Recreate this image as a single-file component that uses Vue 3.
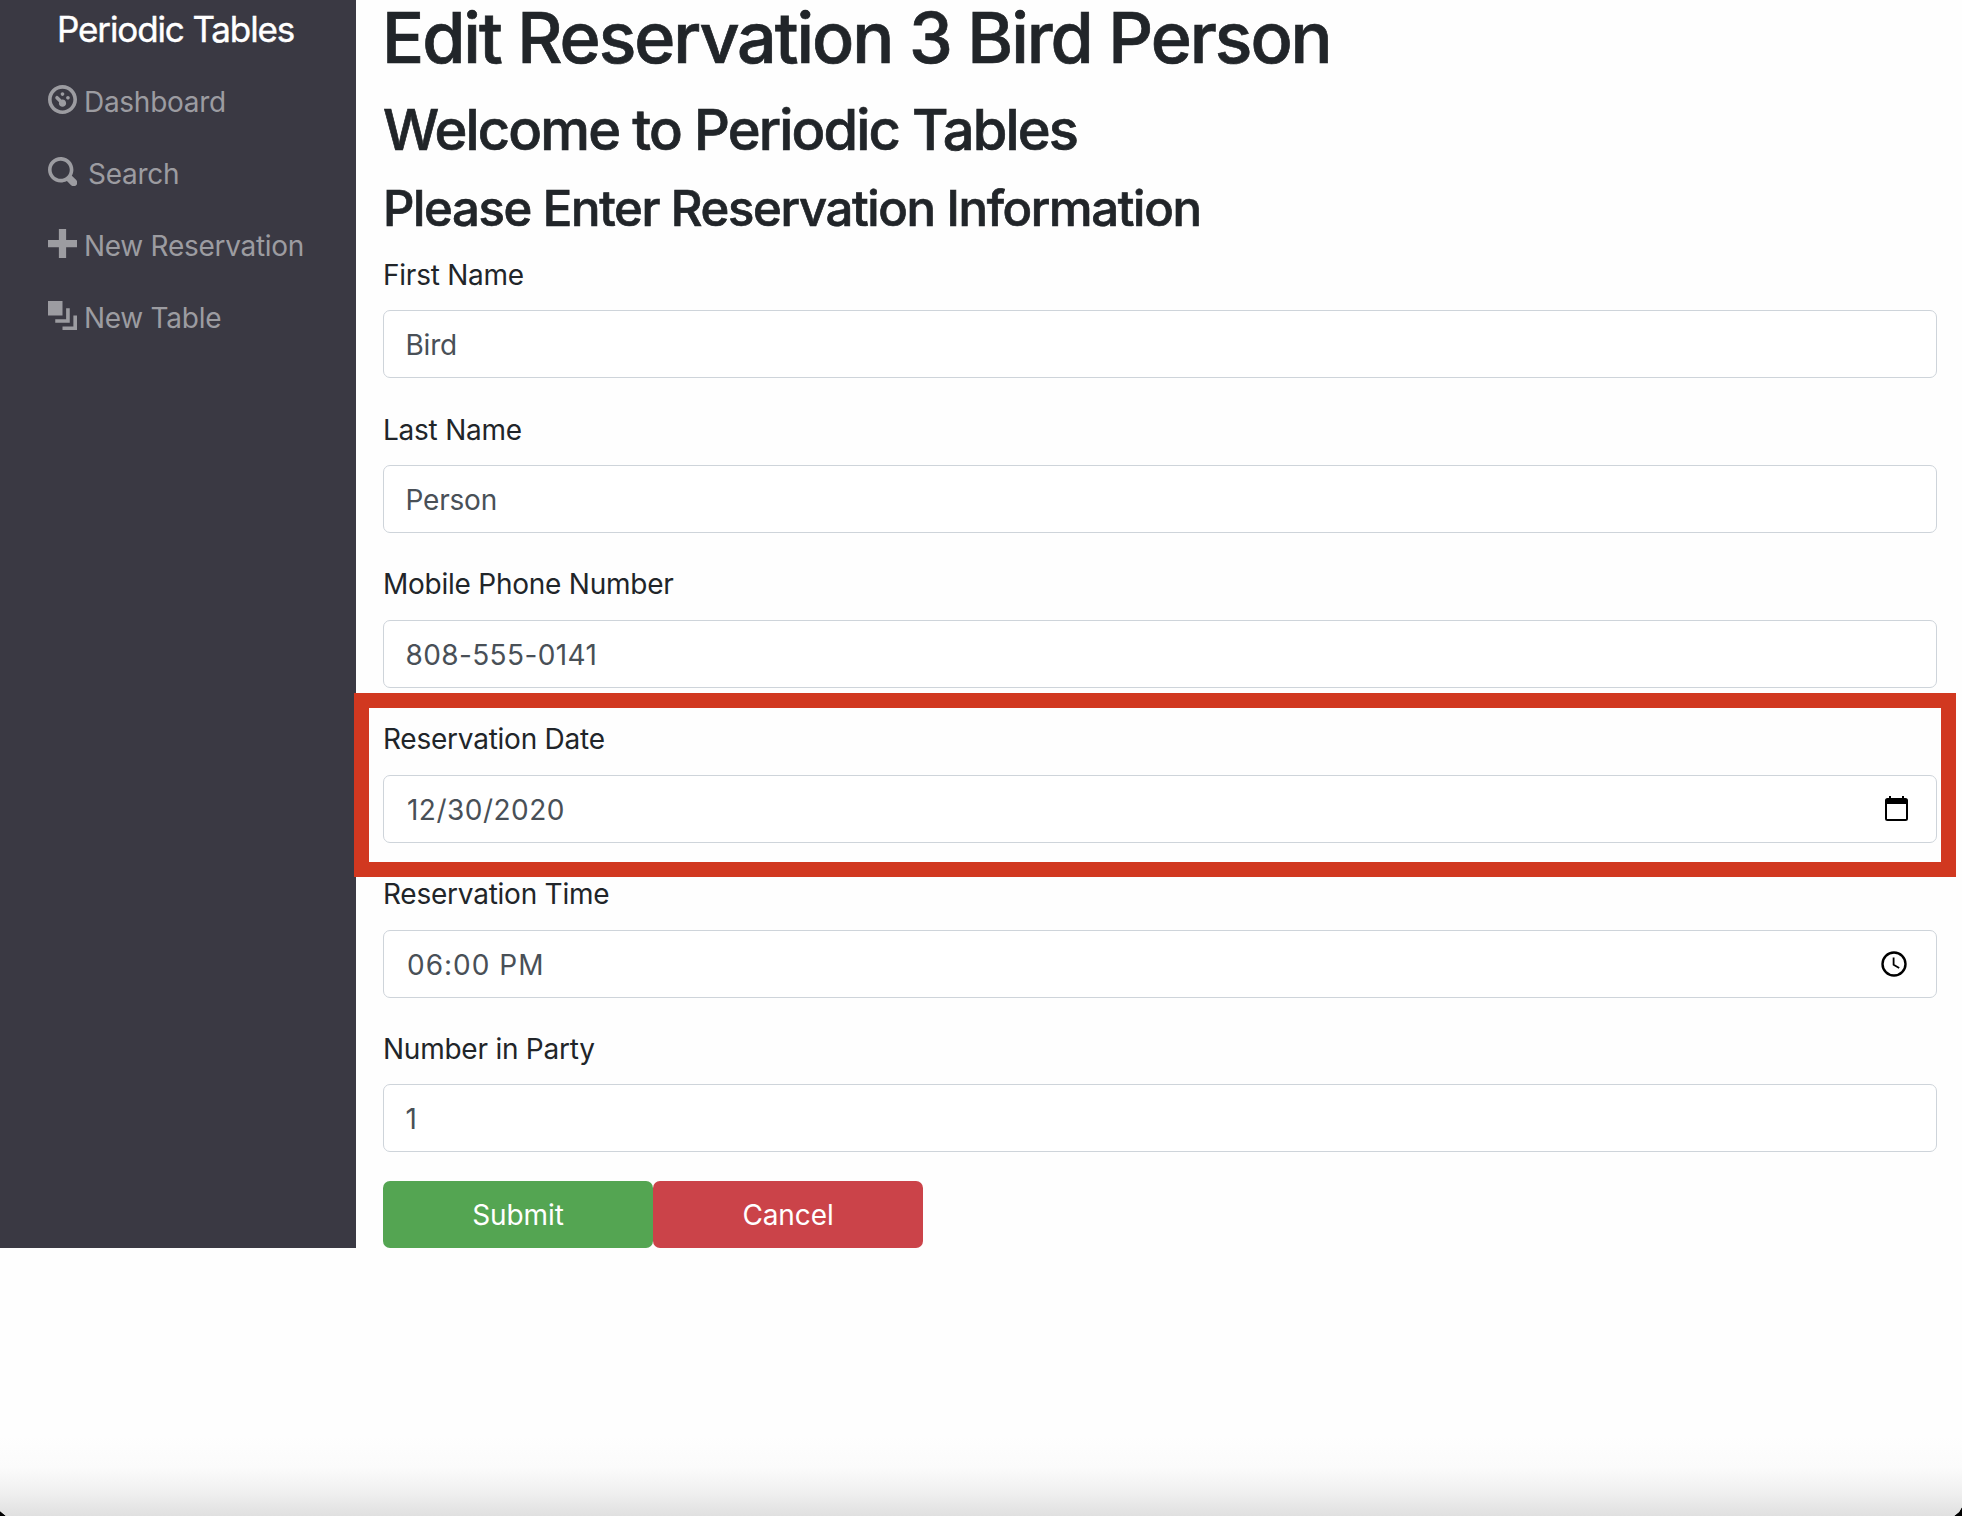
<script setup>
import { reactive } from 'vue'

const links = [
  { id: 'dashboard', label: 'Dashboard', d: 'M4 0c-2.2 0-4 1.8-4 4s1.8 4 4 4 4-1.8 4-4-1.8-4-4-4zm0 1c1.66 0 3 1.34 3 3s-1.34 3-3 3-3-1.34-3-3 1.34-3 3-3zm0 1c-.28 0-.5.22-.5.5s.22.5.5.5.5-.22.5-.5-.22-.5-.5-.5zm-1.66 1a.5.5 0 0 0-.19.84l.91.91c-.02.08-.06.16-.06.25 0 .55.45 1 1 1s1-.45 1-1-.45-1-1-1c-.09 0-.17.04-.25.06l-.91-.91a.5.5 0 0 0-.44-.16.5.5 0 0 0-.06 0zm3.16 0c-.28 0-.5.22-.5.5s.22.5.5.5.5-.22.5-.5-.22-.5-.5-.5z' },
  { id: 'search', label: 'Search', d: 'M3.5 0c-1.93 0-3.5 1.57-3.5 3.5s1.57 3.5 3.5 3.5c.59 0 1.17-.14 1.66-.41a1 1 0 0 0 .13.13l1 1a1.02 1.02 0 1 0 1.44-1.44l-1-1a1 1 0 0 0-.16-.13c.27-.49.44-1.06.44-1.66 0-1.93-1.55-3.5-3.5-3.5zm0 1c1.39 0 2.5 1.11 2.5 2.5 0 .66-.24 1.27-.66 1.72-.01.01-.02.02-.03.03a1 1 0 0 0-.13.13c-.44.4-1.04.63-1.69.63-1.39 0-2.5-1.11-2.5-2.5s1.11-2.5 2.5-2.5z' },
  { id: 'new-reservation', label: 'New Reservation', d: 'M3 0v3h-3v2h3v3h2v-3h3v-2h-3v-3h-2z' },
  { id: 'new-table', label: 'New Table', d: 'M0 0v4h4v-4h-4zm5 2v3h-3v1h4v-4h-1zm2 2v3h-3v1h4v-4h-1z' },
]

const fields = reactive([
  { id: 'first', label: 'First Name', value: 'Bird' },
  { id: 'last', label: 'Last Name', value: 'Person' },
  { id: 'mobile', label: 'Mobile Phone Number', value: '808-555-0141' },
  { id: 'date', label: 'Reservation Date', value: '12/30/2020', highlighted: true },
  { id: 'time', label: 'Reservation Time', value: '06:00 PM' },
  { id: 'people', label: 'Number in Party', value: '1' },
])
</script>

<template>
  <div class="window">
    <div class="layout">
      <aside class="sidebar">
        <div class="brand">Periodic Tables</div>
        <nav>
          <a v-for="link in links" :key="link.id" class="nav-link" :class="link.id">
            <svg class="nav-icon" viewBox="0 0 8 8"><path :d="link.d" /></svg>
            <span>{{ link.label }}</span>
          </a>
        </nav>
      </aside>
      <main class="content">
        <h1>Edit Reservation 3 Bird Person</h1>
        <h2>Welcome to Periodic Tables</h2>
        <h3>Please Enter Reservation Information</h3>
        <form @submit.prevent>
          <div v-for="field in fields" :key="field.id" class="field">
            <label :for="field.id">{{ field.label }}</label>
            <div class="control">
              <input :id="field.id" v-model="field.value" type="text" :class="field.id" />
              <svg v-if="field.id === 'date'" class="picker calendar" viewBox="0 0 23 25">
                <path fill-rule="evenodd" d="M4 0h2v2h11V0h2v2h1.5A2.5 2.5 0 0 1 23 4.5v18a2.5 2.5 0 0 1-2.5 2.5h-18A2.5 2.5 0 0 1 0 22.5v-18A2.5 2.5 0 0 1 2.5 2H4zM2 8v15h19V8z" />
              </svg>
              <svg v-if="field.id === 'time'" class="picker clock" viewBox="0 0 26 26">
                <circle cx="13" cy="13" r="11.5" />
                <path d="M12.6 6.5v7.3l5.6 3.2" />
              </svg>
            </div>
            <div v-if="field.highlighted" class="highlight"></div>
          </div>
          <div class="actions">
            <button class="submit" type="submit">Submit</button>
            <button class="cancel" type="button">Cancel</button>
          </div>
        </form>
      </main>
    </div>
    <div class="shade"></div>
  </div>
</template>

<style>
html {
  background: #000;
}
body {
  margin: 0;
}
</style>

<style scoped>
.window {
  display: flex;
  flex-direction: column;
  justify-content: space-between;
  height: 1516px;
  overflow: hidden;
  background: #fefefe;
  clip-path: polygon(0 0, 100% 0, 100% calc(100% - 9px), calc(100% - 3px) calc(100% - 4px), calc(100% - 8px) 100%, 6px 100%, 0 calc(100% - 5px));
  color: #212529;
  font-family: Inter, sans-serif;
  font-size: 28px;
  letter-spacing: -0.24px;
}
.layout {
  display: flex;
  height: 1248px;
}
.sidebar {
  flex: none;
  width: 356px;
  background: #3a3943;
}
.brand {
  height: 66px;
  padding-left: 57px;
  color: #fff;
  font-size: 35px;
  line-height: 58px;
  letter-spacing: -1.12px;
  -webkit-text-stroke: 0.4px currentColor;
}
.nav-link {
  display: flex;
  align-items: center;
  height: 72px;
  padding-left: 48px;
  gap: 7px;
  color: #9c9ca1;
  letter-spacing: -0.28px;
}
.nav-link.search {
  gap: 11px;
}
.nav-icon {
  width: 29px;
  height: 29px;
  margin-bottom: 5px;
  fill: currentColor;
}
.content {
  flex: 1;
  padding: 0 25px 0 27px;
}
h1,
h2,
h3 {
  margin: 0;
  font-weight: 500;
  white-space: nowrap;
  -webkit-text-stroke: 0.7px currentColor;
}
h1 {
  margin-left: -1px;
  font-size: 70px;
  line-height: 75px;
  letter-spacing: -2.07px;
}
h2 {
  margin-top: 20px;
  font-size: 56px;
  line-height: 70px;
  letter-spacing: -1.85px;
}
h3 {
  margin: 13px 0;
  font-size: 49px;
  line-height: 61px;
  letter-spacing: -1.33px;
}
form {
  padding-top: 0.8px;
}
.field {
  position: relative;
  margin-bottom: 29.2px;
}
label {
  display: block;
  margin-bottom: 13.4px;
  padding-top: 1px;
  line-height: 43.2px;
}
.control {
  display: flex;
  position: relative;
}
input {
  box-sizing: border-box;
  width: 100%;
  height: 68px;
  margin: 0;
  padding: 2px 22px 0 21.5px;
  border: 1px solid #ced4da;
  border-radius: 7px;
  outline: 0;
  background: #fff;
  color: #495057;
  font: inherit;
  letter-spacing: -0.2px;
}
input.mobile {
  letter-spacing: 0.38px;
}
input.date {
  padding-left: 23px;
  letter-spacing: 0.48px;
}
input.time {
  padding-left: 23px;
  letter-spacing: 1px;
}
.picker {
  position: absolute;
}
.calendar {
  top: 21px;
  right: 29px;
  width: 23px;
  height: 25px;
}
.clock {
  top: 21px;
  right: 30px;
  width: 26px;
  height: 26px;
  fill: none;
  stroke: #000;
  stroke-width: 2.4;
}
.clock path {
  stroke-width: 1.8;
}
.highlight {
  position: absolute;
  top: -24px;
  right: -19px;
  bottom: -34.5px;
  left: -29.5px;
  border: 15px solid #d13820;
  z-index: 1;
  pointer-events: none;
}
.actions {
  display: flex;
}
button {
  width: 270px;
  height: 67px;
  padding: 1px 0 0;
  border: 0;
  border-radius: 7px;
  color: #fff;
  font: inherit;
  letter-spacing: -0.1px;
}
.submit {
  background: #54a552;
}
.cancel {
  background: #cb4349;
}
.shade {
  height: 80px;
  background: linear-gradient(#fefefe, #fbfbfb 40%, #efefef 72%, #e0e0e0);
}
</style>
